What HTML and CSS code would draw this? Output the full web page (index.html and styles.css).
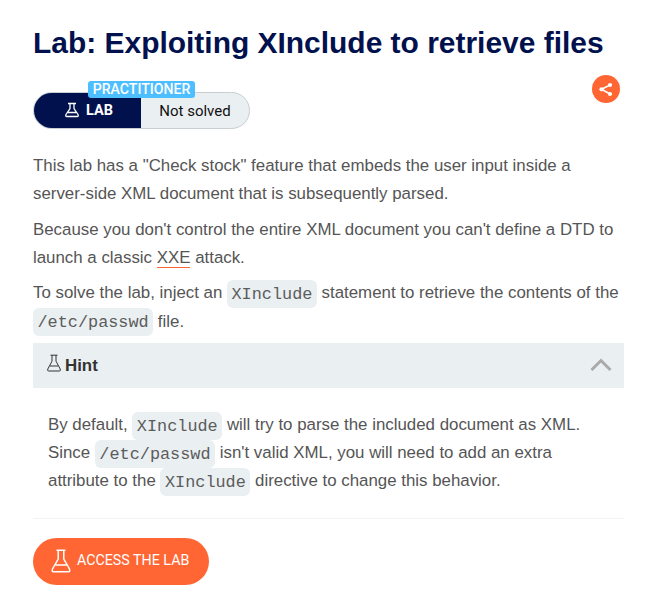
FILE: index.html
```html
<!DOCTYPE html>
<html lang="en">
<head>
<meta charset="utf-8">
<title>Lab: Exploiting XInclude to retrieve files</title>
<link rel="stylesheet" href="styles.css">
</head>
<body>
<main class="lab">
<h1>Lab: Exploiting XInclude to retrieve files</h1>
<div class="meta">
<div class="status">
<span class="level">PRACTITIONER</span>
<span class="kind"><svg class="flask-sm" viewBox="0 0 16 16"><path d="M4 1.500h8M6 1.500v5L2 12.500Q1 14.500 3 14.500h10q2 0 1-2L10 6.500v-5M4 10.500h8"/></svg>LAB</span>
<span class="state">Not solved</span>
</div>
<a class="share"><svg viewBox="0 0 28 28"><path d="M18 10 9.500 14.300 18 19"/><circle cx="18" cy="10" r="2.100"/><circle cx="9.500" cy="14.300" r="2.100"/><circle cx="18" cy="19" r="2.100"/></svg></a>
</div>
<p>This lab has a "Check stock" feature that embeds the user input inside a<br>server-side XML document that is subsequently parsed.</p>
<p class="cause">Because you don't control the entire XML document you can't define a DTD to<br>launch a classic <a class="link">XXE</a> attack.</p>
<p class="goal">To solve the lab, inject an <code>XInclude</code> statement to retrieve the contents of the<br><code>/etc/passwd</code> file.</p>
<section>
<div class="hint-head"><svg class="flask-md" viewBox="0 0 14 18"><path d="M3.500 1.200h7M5 1.200v6L.8 15q-.8 2 1 2h10.400q1.800 0 1-2L9 7.200v-6M3 12h8"/></svg><b>Hint</b><svg class="chevron" viewBox="0 0 22 14"><path d="m1.500 12 9.500-9.500L20.500 12"/></svg></div>
<p class="hint-body">By default, <code>XInclude</code> will try to parse the included document as XML.<br>Since <code>/etc/passwd</code> isn't valid XML, you will need to add an extra<br>attribute to the <code>XInclude</code> directive to change this behavior.</p>
</section>
<a class="access"><svg viewBox="0 0 20 24"><path d="M5.500 1.200h9M7.200 1.200v8.800L1.500 20q-1 2.800 1 2.800h15q2 0 1-2.800L12.800 10v-8.800M4.500 16h11"/></svg><span>ACCESS THE LAB</span></a>
</main>
</body>
</html>
```
FILE: styles.css
```css
* { box-sizing: border-box; }
body { margin: 0; background: #fff; color: #555; font: 16.87px/28px "Liberation Sans", Arial, sans-serif; }
.lab { width: 591px; margin-left: 33px; padding-top: 24px; white-space: nowrap; }
h1 { margin: 0; font: bold 29.950px/38px "Liberation Sans", Arial, sans-serif; color: #00114d; }
svg { flex: none; fill: none; stroke: currentColor; }
.meta { display: flex; justify-content: space-between; margin-top: 30px; height: 37px; }
.status { position: relative; display: flex; width: 217px; height: 37px; border: 1px solid #c8ced1; border-radius: 19px; background: #eaeff2; line-height: 35px; }
.kind { display: flex; align-items: center; width: 107px; padding-left: 30px; border-radius: 18px 0 0 18px; background: #00114d; color: #fff; font: bold 14.500px/35px Roboto, sans-serif; }
.state { width: 108px; text-align: center; font: 15px/36px Roboto, sans-serif; color: #111; }
.level { position: absolute; top: -12px; left: 54px; width: 107px; height: 17px; border-radius: 3px; background: #4dbeff; color: #fff; font: 500 14.100px/17px Roboto, sans-serif; text-align: center; }
.flask-sm { width: 16px; height: 16px; margin: -1px 6px 0 0; stroke-width: 1.3; }
.share { width: 28px; height: 28px; margin: -17px 4px 0 0; border-radius: 50%; background: #ff6633; color: #fff; }
.share svg { display: block; stroke-width: 1.600; }
.share circle { fill: #fff; stroke: none; }
p { margin: 0 0 8px; }
.meta + p { margin-top: 23px; }
.cause { margin-bottom: 7px; }
.link { border-bottom: 1px solid #ff6633; }
code { padding: 4.500px; border-radius: 6px; background: #eaeff2; color: #5c5c5c; font: 16.85px/1 "Liberation Mono", monospace; }
.goal { margin-bottom: 7px; line-height: 28.500px; }
.hint-head { display: flex; align-items: center; height: 45px; padding: 0 12px 0 14px; background: #eaeff2; color: #333; }
.hint-head b { margin-top: 1px; }
.flask-md { width: 14px; height: 18px; margin: -5px 4px 0 0; }
.chevron { width: 22px; height: 14px; margin: -2px 0 0 auto; color: #aaa; stroke-width: 3; }
.hint-body { margin: 0; padding: 23px 15px; border-bottom: 1px solid #f2f2f2; }
.access { display: flex; align-items: center; width: 176px; height: 47px; margin-top: 19px; padding-left: 18px; border-radius: 24px; background: #ff6633; color: #fff; font: 14.250px/28px Roboto, sans-serif; }
.access svg { width: 20px; height: 24px; margin: -2px 6px 0 0; stroke-width: 1.500; }
.access span { margin-top: -3px; }
```
